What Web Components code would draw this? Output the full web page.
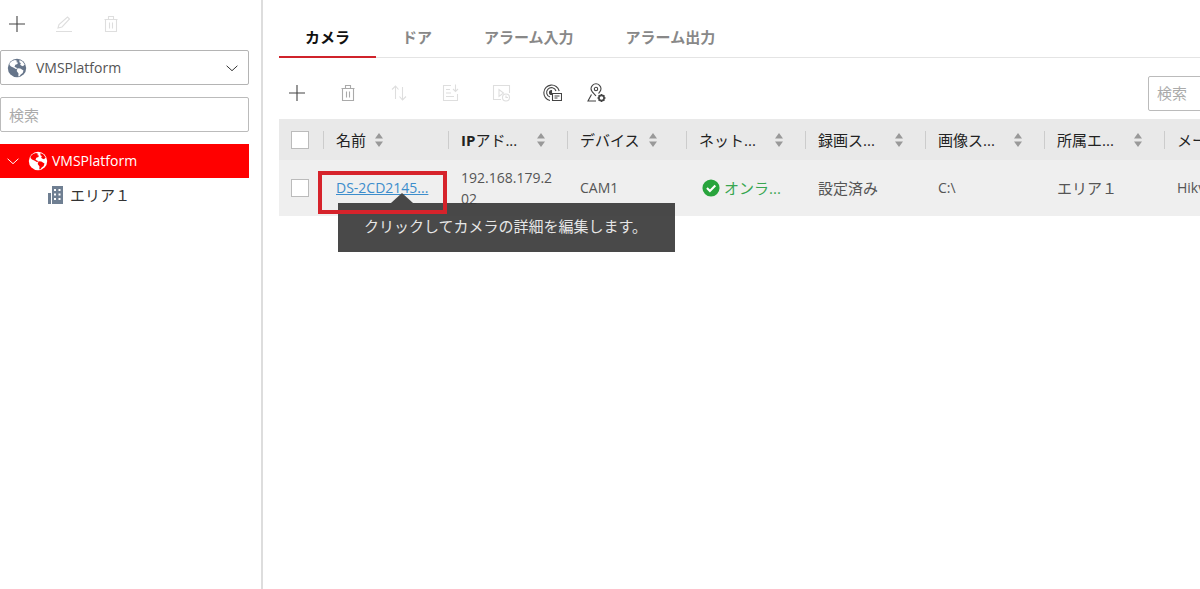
<!DOCTYPE html>
<html lang="ja">
<head>
<meta charset="utf-8">
<title>VMSPlatform</title>
<style>
html, body { margin: 0; height: 100%; }
body {
  --latin: 14px;
  font: 15px/20px "Open Sans", "Noto Sans CJK JP", sans-serif;
  color: #333;
  background: #fff;
  overflow: hidden;
}
</style>
</head>
<body>
<vms-app></vms-app>
<script>
const define = (name, html) => {
  const template = document.createElement('template');
  template.innerHTML = html;
  customElements.define(name, class extends HTMLElement {
    constructor() {
      super();
      this.attachShadow({ mode: 'open' }).append(template.content.cloneNode(true));
    }
  });
};

const icons = {
  plus: '<path d="M10 2v16M2 10h16"/>',
  edit: '<path d="M4 14l1-3.500L13.500 3l2 2L8 13zM2 17.500h16"/>',
  trash: '<path d="M3.500 5.500h13M7.500 5V2.500h5V5M4.500 5.500V17.500h11V5.500M8.500 8.500v6M11.500 8.500v6"/>',
  sort: '<path d="M6.500 16V3M3 6.500L6.500 3l3 3.500M13.500 4v13M10.500 13.500l3 3.500 3.500-3.500"/>',
  report: '<path d="M11 2.500H3.500v15h14V11M6 6.500h4M6 10h5M6 13.500h8M15.500 1.500v7M13 6l2.500 2.500L18 6"/>',
  play: '<path d="M10 16.500H2.500v-14h16V10M8 6.500v7L12.500 10z"/><circle cx="15" cy="14.500" r="3.500"/><path d="M15 12.500v2h2"/>',
  disc: '<path d="M8 17.500A7.800 7.800 0 1 1 17.200 8M8 14A4.800 4.800 0 1 1 14 8"/><path d="M9.500 7.500a2 2 0 0 0 0 4z" fill="currentColor"/><path d="M10.500 10.500h9v7h-9zM12.500 13h5M12.500 15h3"/>',
  pin: '<path d="M10 13C8 10.500 5 8.500 5 5.800a5 5 0 0 1 10 0C15 8 13.500 9 12.500 10.500M5.500 11.500L2 18h8"/><circle cx="10" cy="6" r="1.700"/><circle cx="15.500" cy="15" r="2.600" stroke-width="1.600"/><path stroke-width="1.500" d="M15.500 11v1.500M15.500 17.500V19M11.500 15H13M18 15h1.500M12.700 12.200l1 1M17.300 16.800l1 1M18.300 12.200l-1 1M13.700 16.800l-1 1"/>',
  down: '<path d="M4 7.500l6 5.500 6-5.500"/>',
  globe: '<circle cx="10" cy="10" r="9.200" fill="currentColor" stroke="none"/><path fill="var(--land, #fff)" stroke="none" d="M2.500 5.500C4 3.500 6 2.300 8 2l2.500 1-1.500 1 1.800.5-.3 1.500-2.200.8L7.500 9l1.800.6.7 1-.8.6-2.400-1.400L4 8.500 2.600 7zM10.500 10.300l2.800.2 3.200 2-.8 2.500-2 1.500-1.400 2-1-.3.2-2.700-1.800-2.500zM12.500 2l3 1.500 2.200 3-1.700 1.700-2-.7-1-1.500 1.200-.8-1.800-1z"/>',
  building: '<g fill="currentColor" stroke="none"><path d="M2 8h3v11H2z"/><path fill-rule="evenodd" d="M6 1h11v18H6zM8 4v2h2V4zM12.500 4v2h2V4zM8 8.500v2h2v-2zM12.500 8.500v2h2v-2zM8 13v2h2v-2zM12.500 13v2h2v-2z"/></g>',
  ok: '<circle cx="10" cy="10" r="9.500" fill="#28a43c" stroke="none"/><path d="M5.500 10l3.300 3.300 6-6" stroke="#fff" stroke-width="2.300"/>'
};

customElements.define('vms-icon', class extends HTMLElement {
  constructor() {
    super();
    this.attachShadow({ mode: 'open' });
  }
  connectedCallback() {
    this.shadowRoot.innerHTML = `
      <style>
        :host { display: block; flex: none; width: 20px; height: 20px; }
        svg { display: block; width: 100%; height: 100%; }
      </style>
      <svg viewBox="0 0 20 20" fill="none" stroke="currentColor" stroke-width="1.100" aria-hidden="true">${icons[this.getAttribute('name')]}</svg>`;
  }
});

define('tool-button', `
  <style>
    :host { display: block; color: #444; }
    :host([off]) { color: #dedede; }
    :host([faint]) { color: #aaa; }
    button { display: block; padding: 0; border: 0; background: none; color: inherit; }
  </style>
  <button type="button" aria-label="ツール"><slot></slot></button>`);

define('search-box', `
  <style>
    :host { display: block; }
    input {
      display: block; box-sizing: border-box; width: 100%; height: 35px; margin: 0; padding: 0 8px;
      border: 1px solid #bbb; border-radius: 2px; background: #fff; font: inherit; color: #333;
    }
    input::placeholder { color: #aaa; opacity: 1; }
  </style>
  <input type="text" placeholder="検索" aria-label="検索">`);

define('platform-select', `
  <style>
    :host { display: grid; grid-template-columns: 34px 1fr 34px; align-items: center; height: 34px; font-size: var(--latin); }
    select {
      grid-area: 1 / 1 / 2 / 4; box-sizing: border-box; width: 100%; height: 35px; margin: 0; padding: 0 35px;
      appearance: none; border: 1px solid #b4b4b4; border-radius: 2px; background: #fff; font: inherit; color: #555;
    }
    vms-icon { z-index: 1; pointer-events: none; }
    .globe { grid-area: 1 / 1; margin-left: 7px; color: #66758a; }
    .down { grid-area: 1 / 3; justify-self: center; width: 18px; height: 18px; }
  </style>
  <select aria-label="プラットフォーム"><option>VMSPlatform</option></select>
  <vms-icon class="globe" name="globe"></vms-icon>
  <vms-icon class="down" name="down"></vms-icon>`);

define('tree-item', `
  <style>
    :host { display: flex; align-items: center; height: 34px; padding-left: 46px; gap: 4px; }
    :host([selected]) { padding-left: 4px; background: #f00; color: #fff; font-size: var(--latin); --land: #f00; }
  </style>
  <slot name="icon"></slot><slot></slot>`);

define('vms-sidebar', `
  <style>
    :host { display: block; box-sizing: border-box; padding-right: 12px; border-right: 2px solid #ddd; }
    .tools { display: flex; gap: 27px; padding: 14px 7px 16px; }
    search-box { margin: 13px 0 12px; }
    .twist { width: 18px; height: 18px; }
    .world { margin-left: 2px; }
    .building { color: #6f7f92; }
  </style>
  <div class="tools">
    <tool-button><vms-icon name="plus"></vms-icon></tool-button>
    <tool-button off><vms-icon name="edit"></vms-icon></tool-button>
    <tool-button off><vms-icon name="trash"></vms-icon></tool-button>
  </div>
  <platform-select></platform-select>
  <search-box></search-box>
  <tree-item selected>
    <vms-icon class="twist" slot="icon" name="down"></vms-icon>
    <vms-icon class="world" slot="icon" name="globe"></vms-icon>VMSPlatform
  </tree-item>
  <tree-item><vms-icon class="building" slot="icon" name="building"></vms-icon>エリア１</tree-item>`);

define('nav-tab', `
  <style>
    :host { display: block; }
    a { display: block; padding: 27px 26px 9px; border-bottom: 2px solid transparent; color: #888; font-weight: 700; line-height: 20px; text-decoration: none; }
    :host([active]) a { color: #111; border-color: #d0232b; }
  </style>
  <a href="#"><slot></slot></a>`);

define('sort-arrows', `
  <style>
    :host { display: block; flex: none; width: 8px; height: 16px; }
    svg { display: block; }
  </style>
  <svg width="8" height="16" viewBox="0 0 8 16" fill="#999" aria-hidden="true"><path d="M4 1l4 5.500H0zM4 15l4-5.500H0z"/></svg>`);

define('check-box', `
  <style>
    :host { display: block; margin-left: 12px; }
    input { display: block; box-sizing: border-box; width: 18px; height: 18px; margin: 0; appearance: none; border: 1px solid #bbb; background: #fff; }
  </style>
  <input type="checkbox" aria-label="選択">`);

define('hint-bubble', `
  <style>
    :host { display: block; padding: 13px 28px 16px 26px; background: rgba(58, 58, 58, .92); color: #e6e6e6; white-space: nowrap; }
    :host::before {
      content: ""; position: absolute; left: 53px; bottom: 100%;
      border: solid transparent; border-width: 0 11px 10px; border-bottom-color: #484848;
    }
  </style>
  <slot></slot>`);

const columns = ['IPアド...', 'デバイス', 'ネット...', '録画ス...', '画像ス...', '所属エ...', 'メーカ...'];
define('camera-table', `
  <style>
    :host { display: block; }
    table { width: 100%; table-layout: fixed; border-collapse: collapse; }
    th, td { padding: 0; text-align: left; font-weight: 400; vertical-align: middle; }
    thead tr { height: 41px; background: #e9e9e9; color: #222; }
    tbody tr { height: 56px; background: #efefef; color: #555; }
    .select { width: 44px; }
    .name { width: 125px; }
    .data { width: 119px; }
    .data.wide { width: 120px; }
    .head { display: flex; align-items: center; height: 18px; padding: 0 22px 0 12px; border-left: 1px solid #ccc; white-space: nowrap; }
    .head sort-arrows { margin-left: auto; }
    .head.near { gap: 9px; }
    .near sort-arrows { margin: 0; }
    td { padding-left: 13px; }
    td:first-child { padding: 0; }
    .ip { font-size: var(--latin); word-break: break-all; padding-right: 12px; line-height: 21px; }
    .camera { position: relative; font-size: var(--latin); white-space: nowrap; }
    .camera a { color: #3c8dcc; }
    .latin { font-size: var(--latin); }
    .mark { position: absolute; z-index: 2; inset: 11px 1px 2px -5px; border: 4px solid #d6232b; pointer-events: none; }
    hint-bubble { position: absolute; z-index: 1; left: 15px; top: 43px; font-size: 15px; }
    .state { display: flex; align-items: center; gap: 4px; margin-left: 3px; color: #38a651; white-space: nowrap; }
    .state vms-icon { width: 18px; height: 18px; }
  </style>
  <table>
    <thead><tr>
      <th class="select"><check-box></check-box></th>
      <th class="name"><div class="head near">名前<sort-arrows></sort-arrows></div></th>
      ${columns.map((c, i) => `<th class="${i < 6 ? 'data' : 'last'}${i === 3 || i === 5 ? ' wide' : ''}"><div class="head${i === 1 ? ' near' : ''}"><span>${i ? c : '<b>IP</b>アド...'}</span><sort-arrows></sort-arrows></div></th>`).join('')}
    </tr></thead>
    <tbody><tr>
      <td><check-box></check-box></td>
      <td class="camera"><a href="#">DS-2CD2145...</a><hint-bubble role="tooltip">クリックしてカメラの詳細を編集します。</hint-bubble><span class="mark"></span></td>
      <td class="ip">192.168.179.202</td>
      <td class="latin">CAM1</td>
      <td><div class="state"><vms-icon name="ok"></vms-icon>オンラ...</div></td>
      <td>設定済み</td>
      <td class="latin">C:\\</td>
      <td>エリア１</td>
      <td class="latin">Hikvision</td>
    </tr></tbody>
  </table>`);

define('vms-main', `
  <style>
    :host { display: block; overflow: hidden; padding-left: 16px; }
    .page { min-width: 1069px; }
    nav { display: flex; border-bottom: 1px solid #e4e4e4; }
    nav nav-tab { margin-bottom: -1px; }
    .tools { display: flex; align-items: center; height: 34px; gap: 31px; padding: 18px 0 9px 8px; }
    .maps { display: flex; gap: 24px; }
    search-box { width: 200px; margin-left: auto; }
  </style>
  <div class="page">
    <nav>
      <nav-tab active>カメラ</nav-tab><nav-tab>ドア</nav-tab><nav-tab>アラーム入力</nav-tab><nav-tab>アラーム出力</nav-tab>
    </nav>
    <div class="tools">
      <tool-button><vms-icon name="plus"></vms-icon></tool-button>
      <tool-button faint><vms-icon name="trash"></vms-icon></tool-button>
      <tool-button off><vms-icon name="sort"></vms-icon></tool-button>
      <tool-button off><vms-icon name="report"></vms-icon></tool-button>
      <tool-button off><vms-icon name="play"></vms-icon></tool-button>
      <div class="maps">
        <tool-button><vms-icon name="disc"></vms-icon></tool-button>
        <tool-button><vms-icon name="pin"></vms-icon></tool-button>
      </div>
      <search-box></search-box>
    </div>
    <camera-table></camera-table>
  </div>`);

define('vms-app', `
  <style>
    :host { display: grid; grid-template-columns: 263px minmax(0, 1fr); min-height: 100vh; }
  </style>
  <vms-sidebar></vms-sidebar>
  <vms-main></vms-main>`);
</script>
</body>
</html>
